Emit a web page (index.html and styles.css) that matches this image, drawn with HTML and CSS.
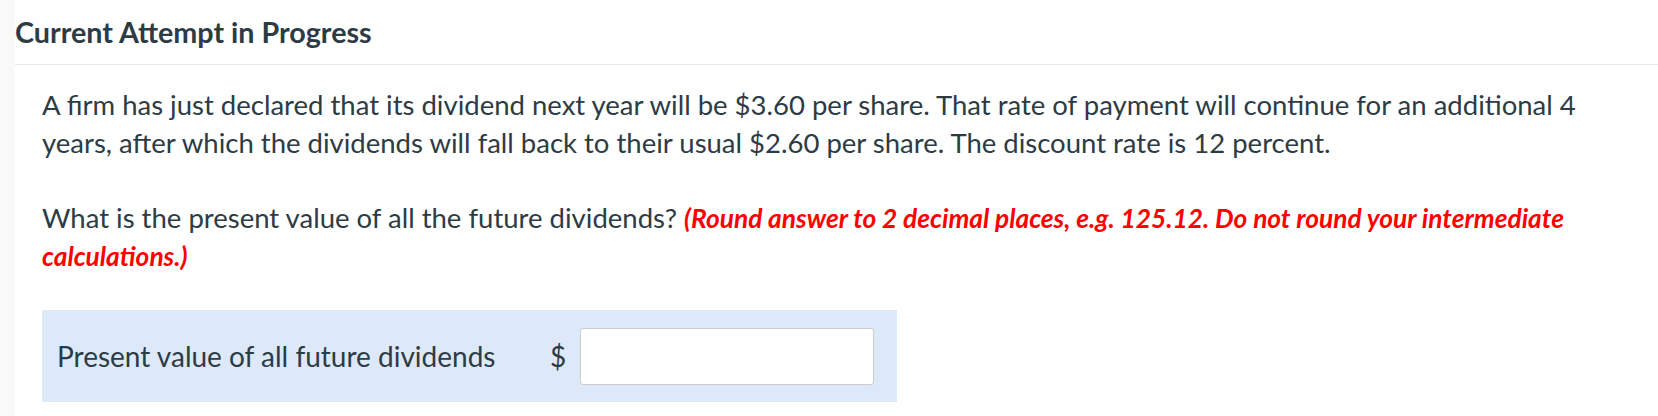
FILE: index.html
```html
<!DOCTYPE html>
<html>
<head>
<meta charset="utf-8">
<link rel="stylesheet" href="styles.css">
</head>
<body>
<div class="page">
  <div class="rail"></div>
  <div class="main">
    <h2 class="title">Current Attempt in Progress</h2>
    <div class="question">
      <p class="para">A firm has just declared that its dividend next year will be $3.60 per share. That rate of payment will continue for an additional 4 years, after which the dividends will fall back to their usual $2.60 per share. The discount rate is 12 percent.</p>
      <p class="para">What is the present value of all the future dividends? <span class="hint">(Round answer to 2 decimal places, e.g. 125.12. Do not round your intermediate calculations.)</span></p>
      <div class="answer">
        <span class="label">Present value of all future dividends</span>
        <span class="currency">$</span>
        <input class="field" type="text">
      </div>
    </div>
  </div>
</div>
</body>
</html>
```
FILE: styles.css
```css
html, body {
  margin: 0;
  padding: 0;
  background: #ffffff;
}
body {
  font-family: Lato, "Open Sans", sans-serif;
  color: #2d3b45;
}
.page {
  display: flex;
  min-height: 416px;
}
.rail {
  width: 15px;
  flex: 0 0 15px;
  background: #f9f9f9;
}
.main {
  flex: 1;
}
.title {
  margin: 0;
  height: 65px;
  box-sizing: border-box;
  padding-top: 15px;
  font-size: 28.7px;
  font-weight: 700;
  line-height: 34px;
  border-bottom: 1px solid #e8e8e8;
}
.question {
  padding: 21px 0 0 27px;
}
.para {
  margin: 0 0 37px 0;
  font-size: 27.5px;
  line-height: 38px;
  max-width: 1560px;
}
.hint {
  color: #ff0000;
  font-weight: 700;
  font-style: italic;
  font-size: 26.3px;
  line-height: 36px;
}
.answer {
  width: 855px;
  height: 92px;
  margin-top: -2px;
  background: #dde8f8;
  display: flex;
  align-items: center;
  padding-left: 15px;
  box-sizing: border-box;
}
.label {
  font-size: 28px;
  width: 493px;
}
.currency {
  font-size: 28px;
  width: 30px;
}
.field {
  width: 294px;
  height: 57px;
  box-sizing: border-box;
  border: 1px solid #cccccc;
  border-radius: 3px;
  background: #ffffff;
  margin: 0;
}
```
